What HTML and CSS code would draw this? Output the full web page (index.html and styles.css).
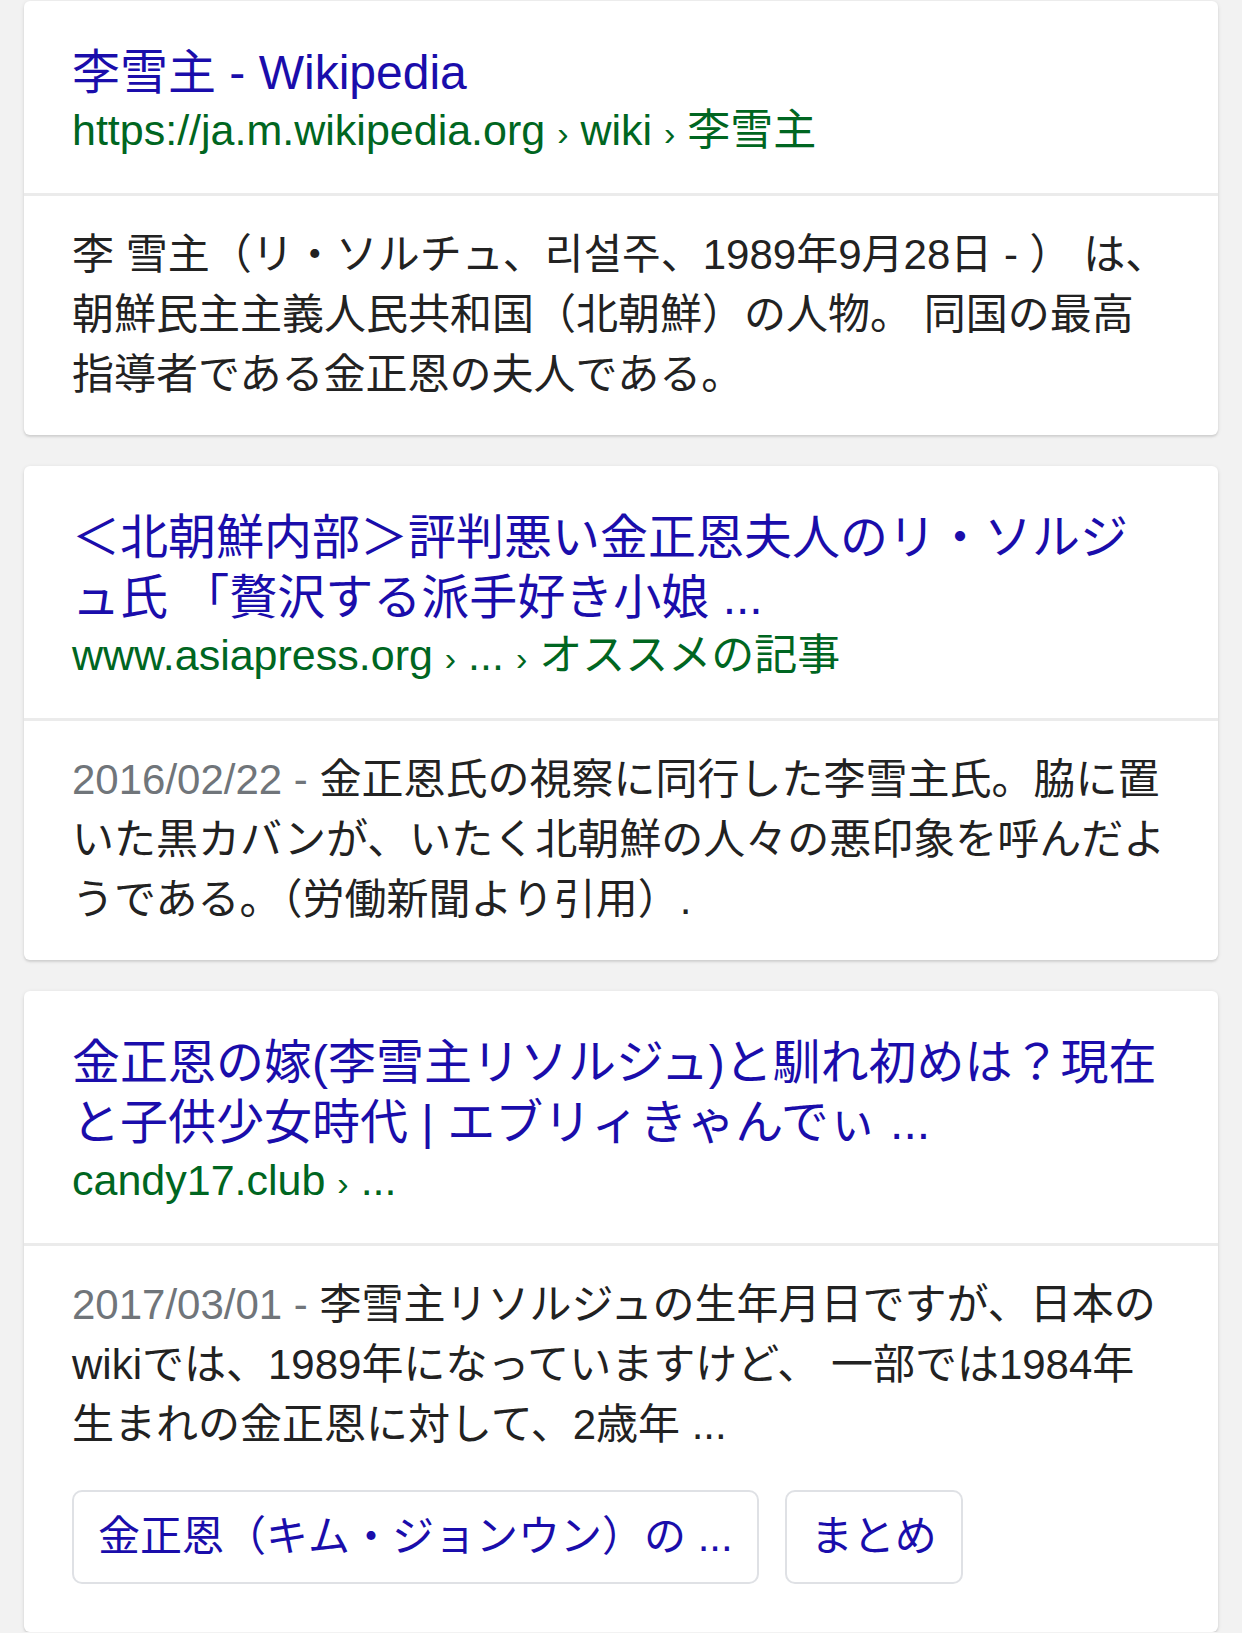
FILE: index.html
```html
<!DOCTYPE html>
<html lang="ja">
<head>
    <meta charset="UTF-8">
    <meta name="viewport" content="width=device-width, initial-scale=1.0">
    <title>李雪主 - 検索結果</title>
    <link rel="stylesheet" href="styles.css">
</head>
<body>
    <div class="results">

        <div class="result-card">
            <div class="result-head">
                <a class="result-title" href="#">李雪主 - Wikipedia</a>
                <div class="result-url">https://ja.m.wikipedia.org <span class="sep">›</span> wiki <span class="sep">›</span> 李雪主</div>
            </div>
            <div class="result-body">
                <p class="snippet">李 雪主（リ・ソルチュ、리설주、1989年9月28日 - ） は、<br>朝鮮民主主義人民共和国（北朝鮮）の人物。 同国の最高<br>指導者である金正恩の夫人である。</p>
            </div>
        </div>

        <div class="result-card">
            <div class="result-head">
                <a class="result-title" href="#">＜北朝鮮内部＞評判悪い金正恩夫人のリ・ソルジ<br>ュ氏 「贅沢する派手好き小娘 ...</a>
                <div class="result-url">www.asiapress.org <span class="sep">›</span> ... <span class="sep">›</span> オススメの記事</div>
            </div>
            <div class="result-body">
                <p class="snippet"><span class="date">2016/02/22 - </span>金正恩氏の視察に同行した李雪主氏。脇に置<br>いた黒カバンが、いたく北朝鮮の人々の悪印象を呼んだよ<br>うである。（労働新聞より引用）.</p>
            </div>
        </div>

        <div class="result-card">
            <div class="result-head">
                <a class="result-title" href="#">金正恩の嫁(李雪主リソルジュ)と馴れ初めは？現在<br>と子供少女時代 | エブリィきゃんでぃ ...</a>
                <div class="result-url">candy17.club <span class="sep">›</span> ...</div>
            </div>
            <div class="result-body">
                <p class="snippet"><span class="date">2017/03/01 - </span>李雪主リソルジュの生年月日ですが、日本の<br>wikiでは、1989年になっていますけど、 一部では1984年<br>生まれの金正恩に対して、2歳年 ...</p>
                <div class="chips">
                    <a class="chip" href="#">金正恩（キム・ジョンウン）の ...</a>
                    <a class="chip" href="#">まとめ</a>
                </div>
            </div>
        </div>

    </div>
</body>
</html>
```

FILE: styles.css
```css
body {
    margin: 0;
    padding: 0;
    background-color: #f2f2f2;
    font-family: "Liberation Sans", "Noto Sans CJK JP", sans-serif;
    color: #222;
}

.results {
    display: flex;
    flex-direction: column;
    gap: 31px;
    padding: 1px 24px 0;
}

.result-card {
    background-color: #ffffff;
    border-radius: 6px;
    box-shadow: 0 1px 4px rgba(0, 0, 0, 0.1), 0 2px 2px rgba(0, 0, 0, 0.08);
}

.result-head {
    padding: 42px 48px 36px;
    border-bottom: 3px solid #ebebeb;
}

.result-title {
    display: block;
    font-size: 48px;
    line-height: 60px;
    color: #1a0dab;
    text-decoration: none;
    white-space: nowrap;
}

.result-url {
    font-size: 43px;
    line-height: 54px;
    color: #006621;
    white-space: nowrap;
}

/* smaller breadcrumb arrow, kept out of the line height */
.result-url .sep {
    font-size: 34px;
    line-height: 1;
}

.result-body {
    padding: 29px 48px 30px;
}

.snippet {
    margin: 0;
    font-size: 42px;
    line-height: 60px;
    color: #222;
    white-space: nowrap;
}

.date {
    color: #70757a;
}

.chips {
    display: flex;
    gap: 26px;
    margin: 35px 0 18px;
}

.chip {
    display: block;
    padding: 18px 24px;
    border: 2px solid #dfe1e5;
    border-radius: 10px;
    font-size: 42px;
    line-height: 54px;
    color: #1a0dab;
    text-decoration: none;
    white-space: nowrap;
}
```
